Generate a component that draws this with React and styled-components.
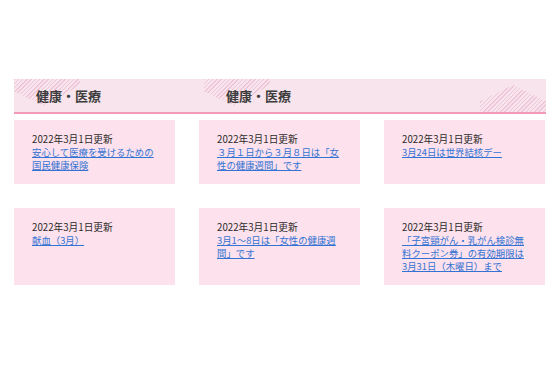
import React from 'react'
import styled, { createGlobalStyle } from 'styled-components'

const GlobalStyle = createGlobalStyle`
	body {
		margin: 0;
		background: #fff;
		font-family: "Noto Sans CJK JP", "Noto Sans", sans-serif;
	}
`

const Page = styled.div`
	width: 532px;
	padding: 79px 0 0 14px;
`
const HeadBand = styled.div`
	position: relative;
	display: flex;
	height: 33px;
	background: #f7e4ec;
	border-bottom: 2px solid #f29bb9;
	overflow: hidden;
	&::after {
		content: '';
		position: absolute;
		right: 0;
		bottom: 0;
		width: 66px;
		height: 27px;
		background: repeating-linear-gradient(135deg, #efc6d7 0 1px, transparent 1px 3px);
		clip-path: polygon(0 100%, 0 60%, 50% 0, 100% 60%, 100% 100%);
	}
`
const Heading = styled.h2`
	position: relative;
	width: ${p => p.$width}px;
	margin: 0;
	padding-left: 22px;
	box-sizing: border-box;
	display: flex;
	align-items: center;
	font-size: 13px;
	font-weight: 700;
	color: #3d3d3d;
	&::before {
		content: '';
		position: absolute;
		left: 0;
		top: 0;
		width: 66px;
		height: 27px;
		background: repeating-linear-gradient(135deg, #efc6d7 0 1px, transparent 1px 3px);
		clip-path: polygon(0 0, 100% 0, 100% 22%, 45% 100%, 0 45%);
	}
	span {
		position: relative;
	}
`
const Grid = styled.div`
	display: grid;
	grid-template-columns: repeat(3, 161px);
	column-gap: 24px;
	row-gap: 24px;
	margin-top: 6px;
`
const Card = styled.div`
	background: #fde1ec;
	padding: 13px 18px 12px;
	font-size: 9.4px;
	line-height: 13px;
`
const Date = styled.div`
	color: #2b2b2b;
	font-size: 9.7px;
	white-space: nowrap;
`
const Link = styled.a`
	color: #3273d3;
	text-decoration: underline;
	white-space: nowrap;
`

const items = [
	['安心して医療を受けるための', '国民健康保険'],
	['３月１日から３月８日は「女', '性の健康週間」です'],
	['3月24日は世界結核デー'],
	['献血（3月）'],
	['3月1～8日は「女性の健康週', '間」です'],
	['「子宮頸がん・乳がん検診無', '料クーポン券」の有効期限は', '3月31日（木曜日）まで'],
]

export default function App() {
	return (
		<Page>
			<GlobalStyle />
			<HeadBand>
				<Heading $width={190}><span>健康・医療</span></Heading>
				<Heading $width={190}><span>健康・医療</span></Heading>
			</HeadBand>
			<Grid>
				{items.map((lines, i) => (
					<Card key={i}>
						<Date>2022年3月1日更新</Date>
						<Link href="#">
							{lines.map((l, j) => (
								<React.Fragment key={j}>
									{j > 0 && <br />}
									{l}
								</React.Fragment>
							))}
						</Link>
					</Card>
				))}
			</Grid>
		</Page>
	)
}
